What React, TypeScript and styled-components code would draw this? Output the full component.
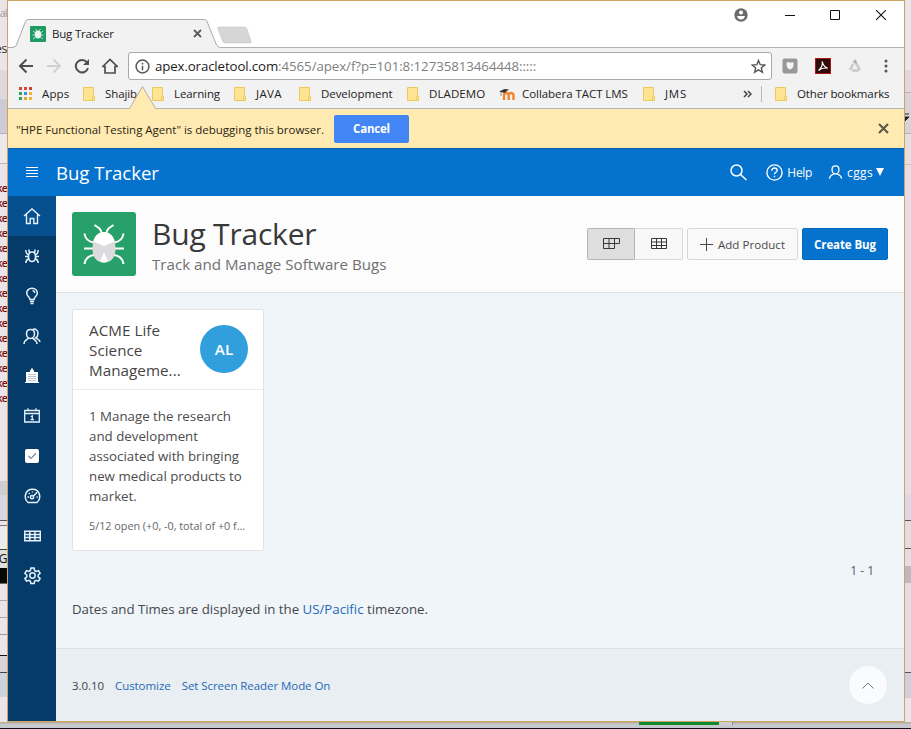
import React from "react";
import styled, { createGlobalStyle, css } from "styled-components";

const GlobalStyle = createGlobalStyle`
  *, *::before, *::after { box-sizing: border-box; }
  html, body { margin: 0; padding: 0; }
  body {
    width: 911px;
    height: 729px;
    overflow: hidden;
    font-family: "Open Sans", "Noto Sans", sans-serif;
    color: #404040;
  }
`;

const type = (size: number, spacing = 0) => css`
  font-size: ${size}px;
  letter-spacing: ${spacing}px;
  white-space: nowrap;
`;

/* ---------- Desktop behind the browser window ---------- */

const Desktop = styled.div`
  display: grid;
  grid-template-columns: 7px 898px 6px;
  grid-template-rows: 722px 6px 1px;
  width: 911px;
  height: 729px;
  background: #c6c8ca;
  overflow: hidden;
`;

const Strip = styled.div`
  display: flex;
  flex-direction: column;
  overflow: hidden;
  background: #ebe5eb;
`;

const Band = styled.div<{ $h: number; $bg?: string; $line?: string }>`
  flex: none;
  height: ${(p) => p.$h}px;
  background: ${(p) => p.$bg ?? "transparent"};
  border-bottom: ${(p) => (p.$line ? `1px solid ${p.$line}` : "none")};
  overflow: hidden;
  line-height: ${(p) => p.$h}px;
`;

const StripWord = styled.span<{ $size: number; $color: string }>`
  ${(p) => type(p.$size, -0.5)}
  color: ${(p) => p.$color};
  display: flex;
  justify-content: flex-end;
`;

const CodeLine = styled.div`
  flex: none;
  height: 15px;
  line-height: 15px;
  display: flex;
  justify-content: flex-end;
  color: #7a0c0c;
  font-family: "Open Sans", sans-serif;
  font-weight: 600;
  ${type(10.5, -0.8)}
`;

const Ledge = styled.div`
  grid-column: 1 / -1;
  display: flex;
  padding-left: 639px;
  background: linear-gradient(#b4a48c, #c6cacf 40%);
`;

const Progress = styled.div`
  width: 94px;
  height: 3px;
  border-right: 1px solid #888;
  background: linear-gradient(90deg, #128a2c 80px, #cfcfcf 80px);
`;

const Taskbar = styled.div`
  grid-column: 1 / -1;
  background: #0a0f1a;
`;

/* ---------- Browser window ---------- */

const Window = styled.div`
  display: flex;
  flex-direction: column;
  border: 1px solid #cda560;
  background: #fff;
`;

const TitleBar = styled.div`
  position: relative;
  flex: none;
  display: flex;
  justify-content: space-between;
  height: 47px;
  border-bottom: 1px solid #b2b2b2;
  background: #fff;
`;

const TabShape = styled.svg`
  position: absolute;
  left: 0;
  top: 0;
`;

const Tab = styled.div`
  position: relative;
  display: flex;
  align-items: center;
  width: 194px;
  height: 29px;
  margin-top: 18px;
  padding-left: 22px;
`;

const TabTitle = styled.span`
  flex: 1;
  margin-left: 6px;
  color: #222;
  ${type(11.5, -0.2)}
`;

const WindowButtons = styled.div`
  display: flex;
  align-items: center;
  height: 28px;
  padding-right: 18px;
`;

const Space = styled.span<{ $w: number }>`
  flex: none;
  width: ${(p) => p.$w}px;
`;

const Toolbar = styled.div`
  flex: none;
  display: flex;
  align-items: center;
  height: 36px;
  background: #f2f2f2;
`;

const NavButtons = styled.div`
  display: flex;
  justify-content: space-between;
  width: 120px;
  padding: 0 10px;
`;

const AddressBox = styled.div`
  display: flex;
  align-items: center;
  width: 644px;
  height: 28px;
  padding: 0 5px 0 6px;
  border: 1px solid #a8a8a8;
  border-radius: 3px;
  background: #fff;
`;

const Url = styled.span`
  flex: 1;
  margin-left: 5px;
  color: #808080;
  ${type(13.3, -0.07)}
`;

const Host = styled.span`
  color: #1c1c1c;
  letter-spacing: -0.14px;
`;

const Extensions = styled.div`
  display: flex;
  align-items: center;
  justify-content: space-between;
  width: 109px;
  margin-left: 10px;
`;

const Bookmarks = styled.div`
  flex: none;
  display: flex;
  align-items: center;
  height: 25px;
  padding-bottom: 4px;
  background: #f2f2f2;
  border-bottom: 1px solid #b6b6b6;
`;

const Bookmark = styled.div<{ $w: number; $gap: number; $ls: number }>`
  display: flex;
  align-items: center;
  gap: ${(p) => p.$gap}px;
  width: ${(p) => p.$w}px;
  flex: none;
  color: #222;
  ${(p) => type(11.5, p.$ls)}
`;

const BookmarkName = styled.span`
  padding-bottom: 2px;
`;

const BookmarkDivider = styled.i`
  width: 1px;
  height: 16px;
  margin: 0 13px 0 9px;
  background: #b9b9b9;
`;

const InfoBar = styled.div`
  position: relative;
  flex: none;
  display: flex;
  align-items: center;
  height: 39px;
  padding: 0 15px 0 8px;
  background: #ffebb2;
`;

const InfoArrow = styled.svg`
  position: absolute;
  left: 119px;
  top: -25px;
`;

const InfoText = styled.span`
  width: 318px;
  padding-top: 1px;
  color: #2b2414;
  ${type(11.5, -0.015)}
`;

const CancelButton = styled.button`
  width: 75px;
  height: 28px;
  margin-right: auto;
  padding: 0;
  border: 0;
  border-radius: 2px;
  background: #4285f4;
  color: #fff;
  font-family: inherit;
  font-weight: 700;
  ${type(11.5, -0.2)}
`;

/* ---------- Bug Tracker application ---------- */

const AppBar = styled.header`
  flex: none;
  display: flex;
  align-items: center;
  height: 48px;
  padding: 0 20px 1px 0;
  border-top: 1px solid #0a60ad;
  background: #0572ce;
  color: #fff;
`;

const MenuToggle = styled.div`
  display: flex;
  justify-content: center;
  width: 48px;
`;

const AppName = styled.span`
  margin-right: auto;
  color: #fff;
  ${type(18.6, -0.03)}
`;

const AppBarText = styled.span<{ $gap: number; $ls: number }>`
  margin: 0 ${(p) => p.$gap}px 0 4px;
  padding-top: 1px;
  ${(p) => type(12, p.$ls)}
`;

const Workspace = styled.div`
  flex: 1;
  display: grid;
  grid-template-columns: 48px 1fr;
  min-height: 0;
`;

const SideNav = styled.nav`
  background: #053b69;
`;

const SideItem = styled.div<{ $active?: boolean }>`
  display: flex;
  align-items: center;
  justify-content: center;
  height: 40px;
  color: #e6f2fb;
  background: ${(p) => (p.$active ? "#06508f" : "transparent")};
`;

const Page = styled.main`
  display: flex;
  flex-direction: column;
  background: #f0f5fa;
`;

const Hero = styled.div`
  flex: none;
  display: flex;
  align-items: center;
  height: 97px;
  padding: 0 16px;
  border-bottom: 1px solid #dde2e7;
  background: #fcfcfd;
`;

const HeroText = styled.div`
  display: flex;
  flex-direction: column;
  margin: 0 auto 0 16px;
`;

const HeroTitle = styled.h1`
  margin: 0;
  padding-top: 1px;
  font-weight: 400;
  line-height: 40px;
  height: 40px;
  color: #383838;
  ${type(30, -0.2)}
`;

const HeroSubtitle = styled.span`
  line-height: 22px;
  color: #707070;
  ${type(15.1, 0.02)}
`;

const Toggle = styled.div<{ $on?: boolean }>`
  display: flex;
  align-items: center;
  justify-content: center;
  width: 48px;
  height: 32px;
  border: 1px solid ${(p) => (p.$on ? "#b5b5b5" : "#d9d9d9")};
  border-left-width: ${(p) => (p.$on ? 1 : 0)}px;
  border-radius: ${(p) => (p.$on ? "2px 0 0 2px" : "0 2px 2px 0")};
  background: ${(p) => (p.$on ? "#dedede" : "#f8f8f8")};
`;

const ActionButton = styled.button<{ $primary?: boolean }>`
  display: flex;
  align-items: center;
  justify-content: center;
  gap: 5px;
  width: ${(p) => (p.$primary ? 86 : 111)}px;
  height: 32px;
  margin-left: 4px;
  padding: 0;
  border: 1px solid ${(p) => (p.$primary ? "#0567bb" : "#d6d6d6")};
  border-radius: 2px;
  background: ${(p) => (p.$primary ? "#0572ce" : "#f9f9f9")};
  color: ${(p) => (p.$primary ? "#fff" : "#4a4a4a")};
  font-family: inherit;
  font-weight: ${(p) => (p.$primary ? 700 : 400)};
  ${(p) => type(11.5, p.$primary ? -0.1 : 0.05)}
`;

const Card = styled.article`
  width: 192px;
  height: 242px;
  margin: 16px 0 0 16px;
  border: 1px solid #dfe3e8;
  border-radius: 2px;
  background: #fff;
`;

const CardHead = styled.div`
  display: flex;
  justify-content: space-between;
  height: 80px;
  padding: 10px 15px 0 16px;
  border-bottom: 1px solid #e9ebee;
`;

const CardTitle = styled.div`
  color: #444;
  line-height: 20px;
  ${type(15.2, 0.05)}
  white-space: pre;
`;

const Avatar = styled.div`
  display: flex;
  align-items: center;
  justify-content: center;
  width: 48px;
  height: 48px;
  margin-top: 5px;
  border-radius: 50%;
  background: #309fdb;
  color: #fff;
  font-weight: 600;
  ${type(15.2)}
`;

const CardBody = styled.div`
  padding: 16px 15px 0 16px;
  color: #4c4c4c;
  line-height: 20px;
  ${type(13.3)}
  white-space: pre;
`;

const CardMeta = styled.div`
  padding: 10px 0 0 16px;
  line-height: 20px;
  color: #666;
  ${type(10.8)}
`;

const Pager = styled.div`
  height: 20px;
  margin-top: 10px;
  padding-right: 30px;
  line-height: 20px;
  text-align: right;
  color: #5a5f64;
  ${type(12)}
`;

const TimezoneNote = styled.p`
  margin: 18px 0 0 16px;
  line-height: 20px;
  color: #45484c;
  ${type(13.25)}
`;

const Link = styled.a`
  color: #1f69b8;
`;

const PageFooter = styled.footer`
  display: flex;
  align-items: center;
  gap: 11px;
  height: 73px;
  margin-top: auto;
  padding: 0 17px 0 16px;
  border-top: 1px solid #dce1e6;
  background: #e9eef3;
  color: #3c4045;
  ${type(11.5, -0.06)}
`;

const TopButton = styled.div`
  display: flex;
  align-items: center;
  justify-content: center;
  width: 38px;
  height: 38px;
  margin-left: auto;
  border-radius: 50%;
  background: #fafbfd;
`;

/* ---------- Drawings ---------- */

type IconProps = { w: number; h?: number; box?: string; sw?: number; color?: string; children: React.ReactNode };
const Icon = ({ w, h = w, box, sw = 1, color = "currentColor", children }: IconProps) => (
  <svg width={w} height={h} viewBox={box ?? `0 0 ${w} ${h}`} fill="none" stroke={color} strokeWidth={sw}>
    {children}
  </svg>
);

const BlockIcon = styled.svg`
  display: block;
`;

const Caret = () => (
  <BlockIcon width="6" height="9" viewBox="0 0 6 9">
    <path d="M0 1h4M0 4h4L0 8z" fill="#222" stroke="#222" />
  </BlockIcon>
);

const BugLogo = ({ size }: { size: number }) => (
  <svg width={size} height={size} viewBox="0 0 64 64">
    <rect width="64" height="64" rx="3" fill="#28a069" />
    <g fill="none" stroke="#fff" strokeWidth="2">
      <path d="M22.500 13l5 3.500q2 2 2 5M41.500 13l-5 3.500q-2 2-2 5" />
      <path d="M12.500 21.500q1 8 9.500 9M51.500 21.500q-1 8-9.500 9M12 36.500h9.500M52 36.500h-9.500M12.500 52q1-8 10-9M51.500 52q-1-8-10-9" />
    </g>
    <path d="M20.500 36C20.500 26 25 20 32 20s11.500 6 11.500 16S39 50.500 32 50.500 20.500 46 20.500 36z" fill="#dcdcde" />
    <path d="M21.300 29.500C23 23.500 27 20 32 20s9 3.500 10.700 9.500L32 34z" fill="#fff" />
    <path d="M32 40l4 9.500q-4 2-8 0z" fill="#fff" />
  </svg>
);

const TabBug = () => (
  <svg width="16" height="16" viewBox="0 0 16 16">
    <rect width="16" height="16" rx="1" fill="#1f9a63" />
    <path d="M5.500 3l1.500 2M10.500 3L9 5M3 5l3 2.500M13 5l-3 2.500M2.500 9h11M3 13l3-2.500M13 13l-3-2.500" stroke="#c4ecd9" strokeWidth=".9" />
    <ellipse cx="8" cy="8.600" rx="3.200" ry="4" fill="#e9f5ef" />
  </svg>
);

const Folder = () => (
  <svg width="12" height="14" viewBox="0 0 12 14">
    <path d="M.5.5h10v9h1v4H.5z" fill="#ffe591" stroke="#ecc95e" />
    <path d="M9.500 9.500v4" stroke="#ecc95e" />
  </svg>
);

const AppsGrid = () => (
  <svg width="14" height="14" viewBox="0 0 14 14">
    {["#db4437", "#db4437", "#c5443a", "#2f9e5b", "#4285f4", "#f0b429", "#2f9e5b", "#e0a92c", "#f0b429"].map((c, i) => (
      <rect key={i} x={(i % 3) * 5} y={Math.floor(i / 3) * 5} width="3" height="3" fill={c} />
    ))}
  </svg>
);

const Moodle = () => (
  <svg width="16" height="13" viewBox="0 0 16 13">
    <path d="M5 12V7.500Q5 5 7.300 5T9.700 7.500V12M9.700 7.500Q9.700 5 12 5t2.500 2.500V12" fill="none" stroke="#ef8632" strokeWidth="2.400" />
    <path d="M0 3.500L5.500 1 10 1.500 5.500 5z" fill="#3c3632" />
    <path d="M2 4v4" stroke="#8c7a6a" strokeWidth=".8" />
  </svg>
);

const Table = ({ cut = false }: { cut?: boolean }) => (
  <Icon w={cut ? 17 : 16} h={12} color="#383838">
    {cut ? (
      <path d="M.5.500h16v5h-5v5H.5zM.5 5.500h11M6 .5v10M11.500.5v5" />
    ) : (
      <path d="M.5.500h15v10H.5zM.5 4h15M.5 7.500h15M5.500.5v10M10.500.5v10" />
    )}
  </Icon>
);

const person = "M8 1.500c2.300 0 3.700 1.700 3.700 4S10.300 10 8 10 4.300 7.800 4.300 5.500 5.700 1.500 8 1.500zM1.500 15c.3-3 2-3.800 5-5M14.500 15c-.3-3-2-3.800-5-5";

const sideIcons: React.ReactNode[] = [
  <Icon w={18} h={17} sw={1.4}>
    <path d="M1 8L9 1l8 7M3.500 6.500v9h3.700v-5h3.600v5h3.700v-9" />
  </Icon>,
  <Icon w={16} h={16} sw={1.5}>
    <path d="M4.500 8.500c0-3 1-4.500 3.500-4.500s3.500 1.500 3.500 4.500S10.500 13.500 8 13.500s-3.500-2-3.500-5zM5.500 5L4.800 1.500M10.500 5l.7-3.500M4.500 6.500Q2 6 1.800 2M11.500 6.500Q14 6 14.200 2M1 8.500h3.500M11.500 8.500H15M4.800 10.800Q2 11.500 1.800 15M11.200 10.800Q14 11.500 14.200 15" />
  </Icon>,
  <Icon w={14} h={18} sw={1.5}>
    <path d="M5 12.500C5 10 1.700 9.500 1.700 6.200 1.700 3.300 4 1.200 7 1.200s5.300 2.100 5.300 5C12.300 9.500 9 10 9 12.500zM5 14.500h4M5.500 16.500h3M7.500 3.500q2 .3 2.300 2.300" />
  </Icon>,
  <Icon w={18} h={17} sw={1.5}>
    <path d="M7.500 1.500c2.400 0 4 1.700 4 4.200S9.900 10.500 7.500 10.500s-4-2.300-4-4.800 1.600-4.200 4-4.200zM1 16c.2-3.500 2-4 4.800-5.800M14 16c-.2-3.500-2-4-4.800-5.800M10 1.200c3-.7 5 1.500 5 4.300 0 2-1 3.700-2.300 4.500 2.500 1 4 1.500 4.300 4" />
  </Icon>,
  <Icon w={14} h={16} sw={0}>
    <path d="M5 4V2h1V.5h2V2h1v2h4v10h1v1H0v-1h1V4z" fill="#fff" />
    <path d="M3.500 6.500h8M3.500 8.500h8M3.500 10.500h8M3.500 12.500h8" stroke="#6f8aa5" strokeWidth="1" strokeDasharray="1 1" />
  </Icon>,
  <Icon w={16} h={16} sw={1.3}>
    <path d="M.7 2.500h14.600v11.500H.7zM.7 5.500h14.600M4 .2v3M12 .2v3M6.800 8.700l1.500-.8v4M6.500 11.700h3.500" />
  </Icon>,
  <Icon w={14} h={14} sw={1.2}>
    <rect width="14" height="14" rx="2" fill="#fff" stroke="none" />
    <path d="M3.500 7l2.500 2.500 4.800-5" stroke="#7b829f" />
  </Icon>,
  <Icon w={17} h={16} sw={1.5}>
    <path d="M4 14.500C-.5 11 .5 1.200 8.500 1.200S17.500 11 13 14.500z" />
    <circle cx="8" cy="9.200" r="1.600" />
    <path d="M9.200 8.200l4-4M3.500 9h1.500M4.800 5l1 1M8.500 3.500v1M12.500 9h1.200" />
  </Icon>,
  <Icon w={17} h={12} sw={1.5}>
    <path d="M.7 1.200h15.600v9.600H.7zM.7 4.400h15.600M.7 7.600h15.600M5.800 1.200v9.600M11 1.200v9.600" />
  </Icon>,
  <Icon w={17} h={18} sw={1.5}>
    <circle cx="8.500" cy="8.500" r="2.700" />
    <path d="M6.900 1h3.200l.5 2.500 1.500.9 2.400-.8 1.600 2.700-1.900 1.700v1.800l1.900 1.700-1.600 2.700-2.400-.8-1.500.9-.5 2.200H6.900l-.5-2.200-1.500-.9-2.400.8L.9 11.500l1.900-1.700V8L.9 6.300l1.600-2.700 2.400.8 1.500-.9z" />
  </Icon>,
];

const bookmarks: [string, number, number][] = [
  ["Shajib", 69, -0.1],
  ["Learning", 82, -0.1],
  ["JAVA", 65, 0.37],
  ["Development", 108, -0.06],
  ["DLADEMO", 92, 0.1],
];

export default function App() {
  return (
    <>
      <GlobalStyle />
      <Desktop>
        <Strip>
          <Band $h={5} />
          <Band $h={16}><StripWord $size={10} $color="#9a8f98">al</StripWord></Band>
          <Band $h={19} />
          <Band $h={16}><StripWord $size={13} $color="#333">es</StripWord></Band>
          <Band $h={14} />
          <Band $h={29} $bg="#ded9df" />
          <Band $h={35} $bg="#cdcbd6" $line="#b4b0b8" />
          <Band $h={30} $bg="#ece8ec" $line="#b9b3ba" />
          <Band $h={17} />
          {Array.from({ length: 15 }, (_, i) => (
            <CodeLine key={i}>ke</CodeLine>
          ))}
          <Band $h={75} />
          <Band $h={14} $bg="#cfcfd2" />
          <Band $h={26} $bg="#d5d8e4" $line="#555" />
          <Band $h={5} $line="#777" />
          <Band $h={24} $bg="#ececee" $line="#444" />
          <Band $h={18} $bg="#dfe0df"><StripWord $size={12} $color="#111">G</StripWord></Band>
          <Band $h={16} $bg="#080808" $line="#666" />
          <Band $h={17} $line="#aaa" />
          <Band $h={17} $line="#aaa" />
          <Band $h={17} $line="#999" />
          <Band $h={21} $line="#111" />
          <Band $h={17} $bg="#d6d3d9" $line="#444" />
          <Band $h={24} $bg="#ccd2e0" />
        </Strip>

        <Window>
          <TitleBar>
            <TabShape width="250" height="48" viewBox="0 0 250 48">
              <path d="M0 46.500H5L8 45L17.500 20.500Q18 18.500 20 18.500H196Q198 18.500 199 20.500L208.500 44L211.500 46.500V48H0Z" fill="#f2f2f2" />
              <path d="M0 46.500H5L8 45L17.500 20.500Q18 18.500 20 18.500H196Q198 18.500 199 20.500L208.500 44L211.500 46.500" fill="none" stroke="#ababab" />
              <path d="M211 26H236Q238 26 239 28L243 40Q243.500 42 242 42H217Q215 42 214.500 40L210 28Q209 26 211 26Z" fill="#d6d6d6" stroke="#c6c6c6" strokeWidth=".6" />
            </TabShape>
            <Tab>
              <TabBug />
              <TabTitle>Bug Tracker</TabTitle>
              <Icon w={9} sw={1.8} color="#5c5c5c"><path d="M1 1l7 7M8 1L1 8" /></Icon>
            </Tab>
            <WindowButtons>
              <svg width="14" height="14" viewBox="0 0 14 14">
                <circle cx="7" cy="7" r="6.700" fill="#6b6b6b" />
                <circle cx="7" cy="4.600" r="2" fill="#fff" />
                <path d="M3 8h8q-1 3.500-4 3.500T3 8z" fill="#fff" />
              </svg>
              <Space $w={37} />
              <Icon w={10} color="#111"><path d="M0 5.500h10" /></Icon>
              <Space $w={35} />
              <Icon w={10} color="#111"><path d="M.5.5h9v9h-9z" /></Icon>
              <Space $w={36} />
              <Icon w={10} sw={1.1} color="#111"><path d="M0 0l10 10M10 0L0 10" /></Icon>
            </WindowButtons>
          </TitleBar>

          <Toolbar>
            <NavButtons>
              <Icon w={16} sw={2} color="#4f4f4f"><path d="M15 8H2.500M8.500 1.500L2 8l6.500 6.500" /></Icon>
              <Icon w={16} sw={1.8} color="#d0d0d0"><path d="M1 8h12.500M7.500 1.500L14 8l-6.500 6.500" /></Icon>
              <Icon w={16} sw={2} color="#4f4f4f">
                <path d="M13 4.500A6.200 6.200 0 1 0 14 10" />
                <path d="M15 1v6H9z" fill="#4f4f4f" stroke="none" />
              </Icon>
              <Icon w={16} sw={1.7} color="#4f4f4f"><path d="M.8 8.500L8 1.500l7.200 7H13V15H3V8.500z" /></Icon>
            </NavButtons>
            <AddressBox>
              <Icon w={15} sw={1.5} color="#555">
                <circle cx="7.500" cy="7.500" r="6.400" />
                <path d="M7.500 6.700v4.500M7.500 3.800v1.600" />
              </Icon>
              <Url><Host>apex.oracletool.com</Host>:4565/apex/f?p=101:8:12735813464448:::::</Url>
              <Icon w={15} sw={1.4} color="#555">
                <path d="M7.500 1.500l1.700 4.200 4.600.3-3.500 2.900 1.100 4.400-3.900-2.400-3.900 2.400 1.100-4.400L1.200 6l4.600-.3z" />
              </Icon>
            </AddressBox>
            <Extensions>
              <svg width="16" height="16" viewBox="0 0 16 16">
                <rect x=".5" y=".5" width="15" height="15" rx="2" fill="#989898" />
                <path d="M4.500 6q-.5-2 1.500-2 3 1 5.500 0v3.500Q11 11 7.500 11.500 4.500 10 4.500 6z" fill="#f4f4f4" />
              </svg>
              <svg width="16" height="16" viewBox="0 0 16 16">
                <rect x=".5" y=".5" width="15" height="15" fill="#300a08" stroke="#b01712" />
                <path d="M3.500 12.500Q8 9 7.200 3.500 8.500 9 12.800 10.300 8 9 3.500 12.500z" fill="none" stroke="#fff" strokeWidth="1.100" />
              </svg>
              <Icon w={14} h={14} sw={2.6} color="#c9c9c9">
                <path d="M5 5L2 11M7 2.500L12 11M4 11.500h7" />
                <path d="M5.500 4L7 1.800l1.500 2.400" stroke="#b0b0b0" strokeWidth="2" />
              </Icon>
              <svg width="12" height="14" viewBox="0 0 12 14" fill="#555">
                <circle cx="7" cy="2" r="1.500" /><circle cx="7" cy="7" r="1.500" /><circle cx="7" cy="12" r="1.500" />
              </svg>
            </Extensions>
          </Toolbar>

          <Bookmarks>
            <Space $w={11} />
            <Bookmark $w={64} $gap={9} $ls={0.15}><AppsGrid /><BookmarkName>Apps</BookmarkName></Bookmark>
            {bookmarks.map(([name, w, ls]) => (
              <Bookmark key={name} $w={w} $gap={10} $ls={ls}>
                <Folder /><BookmarkName>{name}</BookmarkName>
              </Bookmark>
            ))}
            <Bookmark $w={144} $gap={7} $ls={-0.05}><Moodle /><BookmarkName>Collabera TACT LMS</BookmarkName></Bookmark>
            <Bookmark $w={100} $gap={10} $ls={0.75}><Folder /><BookmarkName>JMS</BookmarkName></Bookmark>
            <Icon w={9} h={8} sw={1.5} color="#444"><path d="M1 1l3 3-3 3M5 1l3 3-3 3" /></Icon>
            <BookmarkDivider />
            <Bookmark $w={116} $gap={10} $ls={-0.13}><Folder /><BookmarkName>Other bookmarks</BookmarkName></Bookmark>
          </Bookmarks>

          <InfoBar>
            <InfoArrow width="32" height="26" viewBox="0 0 32 26">
              <path d="M1 24.500L2.500 24.500 15.500 2.500l13 22L31 24.500V26H1z" fill="#ffebb2" />
              <path d="M1 24.500h1.500L15.500 2.500l13 22h2.500" fill="none" stroke="#b6b09e" />
            </InfoArrow>
            <InfoText>"HPE Functional Testing Agent" is debugging this browser.</InfoText>
            <CancelButton>Cancel</CancelButton>
            <Icon w={11} sw={2.1} color="#5b5645"><path d="M1 1l9 9M10 1l-9 9" /></Icon>
          </InfoBar>

          <AppBar>
            <MenuToggle>
              <Icon w={12} h={12}><path d="M0 1.500h12M0 4.500h12M0 7.500h12M0 10.500h12" /></Icon>
            </MenuToggle>
            <AppName>Bug Tracker</AppName>
            <Icon w={17} sw={1.5}><circle cx="6.500" cy="6.500" r="5.500" /><path d="M10.500 10.500l6 5.500" /></Icon>
            <Space $w={19} />
            <Icon w={17} sw={1.4}>
              <circle cx="8.500" cy="8.500" r="7.600" />
              <path d="M5.800 6.700q0-2.700 2.700-2.700t2.700 2.300c0 2-2.700 1.900-2.700 4M8.500 11.700v1.600" />
            </Icon>
            <AppBarText $gap={16} $ls={-0.3}>Help</AppBarText>
            <Icon w={15} h={16} box="0 0 16 16" sw={1.4}><path d={person} /></Icon>
            <AppBarText $gap={3} $ls={0.35}>cggs</AppBarText>
            <svg width="8" height="8" viewBox="0 0 8 8"><path d="M0 0h8L4 8z" fill="#fff" /></svg>
          </AppBar>

          <Workspace>
            <SideNav>
              {sideIcons.map((icon, i) => (
                <SideItem key={i} $active={i === 0}>{icon}</SideItem>
              ))}
            </SideNav>
            <Page>
              <Hero>
                <BugLogo size={64} />
                <HeroText>
                  <HeroTitle>Bug Tracker</HeroTitle>
                  <HeroSubtitle>Track and Manage Software Bugs</HeroSubtitle>
                </HeroText>
                <Toggle $on><Table cut /></Toggle>
                <Toggle><Table /></Toggle>
                <ActionButton>
                  <Icon w={13}><path d="M0 6.500h13M6.500 0v13" /></Icon>
                  Add Product
                </ActionButton>
                <ActionButton $primary>Create Bug</ActionButton>
              </Hero>
              <Card>
                <CardHead>
                  <CardTitle>{"ACME Life\nScience\nManageme..."}</CardTitle>
                  <Avatar>AL</Avatar>
                </CardHead>
                <CardBody>
                  {"1 Manage the research\nand development\nassociated with bringing\nnew medical products to\nmarket."}
                </CardBody>
                <CardMeta>5/12 open (+0, -0, total of +0 f...</CardMeta>
              </Card>
              <Pager>1 - 1</Pager>
              <TimezoneNote>
                Dates and Times are displayed in the <Link>US/Pacific</Link> timezone.
              </TimezoneNote>
              <PageFooter>
                <span>3.0.10</span>
                <Link>Customize</Link>
                <Link>Set Screen Reader Mode On</Link>
                <TopButton>
                  <Icon w={12} h={7} color="#777"><path d="M.5 6.500L6 1l5.500 5.500" /></Icon>
                </TopButton>
              </PageFooter>
            </Page>
          </Workspace>
        </Window>

        <Strip>
          <Band $h={70} $bg="#e9e6ee" />
          <Band $h={23} $bg="#ded8e2" $line="#b9b3c2" />
          <Band $h={20} $bg="#d8d4de" />
          <Band $h={9} $bg="#d8d4de"><Caret /></Band>
          <Band $h={12} $bg="#d5d2da" $line="#b9b3c2" />
          <Band $h={31} $bg="#e6dfe2" $line="#c9c2cb" />
          <Band $h={330} $bg="#e7dde6" />
          <Band $h={26} $bg="#dbd9e6" $line="#555" />
          <Band $h={28} $bg="#e4dddf" $line="#555" />
          <Band $h={17} $bg="#e4dde3" />
          <Band $h={17} $bg="#bdb7bf" />
          <Band $h={90} $bg="#e6dce5" $line="#555" />
          <Band $h={25} $bg="#cfcfe0" />
        </Strip>

        <Ledge><Progress /></Ledge>
        <Taskbar />
      </Desktop>
    </>
  );
}
